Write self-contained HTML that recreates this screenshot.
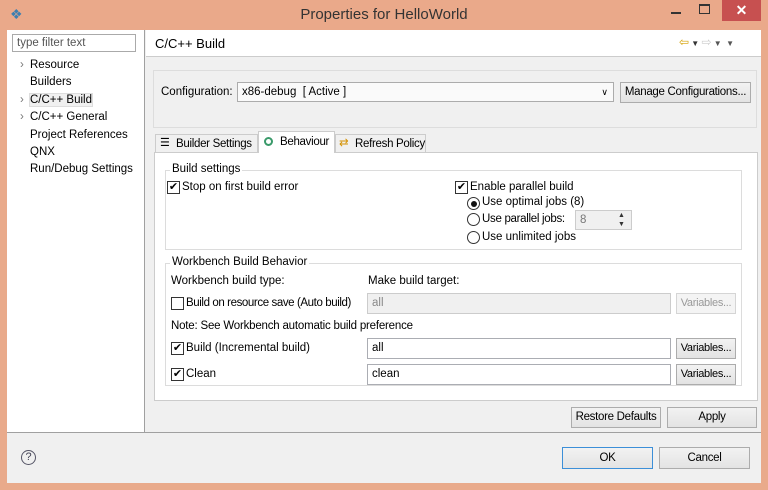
<!DOCTYPE html><html><head><style>
*{box-sizing:border-box;margin:0;padding:0}
body{width:768px;height:490px;background:#e9aa8b;font-family:"Liberation Sans",sans-serif;font-size:11.5px;color:#000;position:relative;overflow:hidden;white-space:nowrap}
.a{position:absolute}
.btn{position:absolute;background:linear-gradient(#f2f2f2,#e3e3e3);border:1px solid #acacac;text-align:center;line-height:19px;overflow:hidden;letter-spacing:-0.3px}
.cb{position:absolute;width:13px;height:13px;border:1px solid #333;background:#fff;font-size:11px;line-height:11px;text-align:center}
.rb{position:absolute;width:13px;height:13px;border:1px solid #333;border-radius:50%;background:#fff}
.inp{position:absolute;background:#fff;border:1px solid #abadb3;padding-left:4px;line-height:18px}
.grp{position:absolute;border:1px solid #dcdcdc}
.lg{position:absolute;background:#fff;padding:0 2px}
</style></head><body>
<div class="a" style="left:0;top:0;width:768px;height:30px;background:#eaa98a"></div>
<div class="a" style="left:10px;top:6px;color:#3c7fb1;font-size:14px">❖</div>
<div class="a" style="left:0;top:6px;width:768px;text-align:center;font-size:15px;color:#333">Properties for HelloWorld</div>
<div class="a" style="left:671px;top:12px;width:10px;height:2px;background:#333"></div>
<div class="a" style="left:699px;top:4px;width:11px;height:10px;border:1px solid #333;border-top-width:2px"></div>
<div class="a" style="left:722px;top:0;width:39px;height:21px;background:#c75050;color:#fff;text-align:center;line-height:20px;font-size:14px;font-weight:bold">✕</div>
<div class="a" style="left:7px;top:30px;width:754px;height:453px;background:#f0f0f0"></div>
<div class="a" style="left:7px;top:30px;width:138px;height:402px;background:#fff;border-right:1px solid #a0a0a0"></div>
<div class="inp" style="left:12px;top:34px;width:124px;height:18px;color:#555;line-height:16px;border-color:#aaa">type filter text</div>
<div class="a" style="left:20px;top:57px;line-height:17.4px;color:#777">›<br><br>›<br>›</div>
<div class="a" style="left:30px;top:57px;line-height:17.4px">Resource<br>Builders<br><span style="background:#f0f0f0;outline:1px solid #ddd">C/C++ Build</span><br>C/C++ General<br>Project References<br>QNX<br>Run/Debug Settings</div>
<div class="a" style="left:146px;top:30px;width:615px;height:27px;background:#fff;border-bottom:1px solid #ccc"></div>
<div class="a" style="left:155px;top:36px;font-size:13px">C/C++ Build</div>
<div class="a" style="left:679px;top:35px;color:#d4a000;font-size:12px">⇦<span style="color:#333;font-size:8px"> ▼ </span><span style="color:#ccc">⇨</span><span style="color:#555;font-size:8px"> ▼ &nbsp;▼</span></div>
<div class="a" style="left:153px;top:70px;width:604px;height:58px;border:1px solid #ddd;background:#f0f0f0"></div>
<div class="a" style="left:161px;top:86px">Configuration:</div>
<div class="inp" style="left:237px;top:82px;width:377px;height:20px;border-color:#acacac;background:#fafafa">x86-debug &nbsp;[ Active ]<span style="position:absolute;right:5px;font-size:9px">∨</span></div>
<div class="btn" style="left:620px;top:82px;width:131px;height:21px">Manage Configurations...</div>
<div class="a" style="left:155px;top:134px;width:103px;height:19px;border:1px solid #ccc;background:#f0f0f0;padding-left:20px;line-height:18px;letter-spacing:-0.3px">Builder Settings</div>
<div class="a" style="left:160px;top:136px;font-size:11px">☰</div>
<div class="a" style="left:258px;top:131px;width:77px;height:22px;border:1px solid #ccc;border-bottom:none;background:#fff;padding-left:21px;line-height:20px;z-index:2;letter-spacing:-0.3px">Behaviour</div>
<div class="a" style="left:264px;top:137px;width:9px;height:9px;border-radius:50%;border:2px solid #3a9a6a;z-index:3"></div>
<div class="a" style="left:335px;top:134px;width:91px;height:19px;border:1px solid #ccc;background:#f0f0f0;padding-left:19px;line-height:18px;letter-spacing:-0.3px">Refresh Policy</div>
<div class="a" style="left:339px;top:135px;color:#d49000">⇄</div>
<div class="a" style="left:154px;top:152px;width:604px;height:249px;border:1px solid #ccc;background:#fff"></div>
<div class="grp" style="left:165px;top:170px;width:577px;height:80px"></div>
<div class="lg" style="left:170px;top:163px">Build settings</div>
<div class="cb" style="left:167px;top:181px">✔</div><div class="a" style="left:182px;top:181px">Stop on first build error</div>
<div class="cb" style="left:455px;top:181px">✔</div><div class="a" style="left:470px;top:181px">Enable parallel build</div>
<div class="rb" style="left:467px;top:197px"><div style="margin:2.5px;width:6px;height:6px;border-radius:50%;background:#111"></div></div><div class="a" style="left:482px;top:196px">Use optimal jobs (8)</div>
<div class="rb" style="left:467px;top:213px"></div><div class="a" style="left:482px;top:213px;letter-spacing:-0.3px">Use parallel jobs:</div>
<div class="inp" style="left:575px;top:210px;width:57px;height:20px;background:#f0f0f0;color:#777;border-color:#ccc">8</div>
<div class="a" style="left:618px;top:211px;font-size:7px;line-height:9px;color:#333">▲<br>▼</div>
<div class="rb" style="left:467px;top:231px"></div><div class="a" style="left:482px;top:231px">Use unlimited jobs</div>
<div class="grp" style="left:165px;top:263px;width:577px;height:123px"></div>
<div class="lg" style="left:170px;top:256px">Workbench Build Behavior</div>
<div class="a" style="left:171px;top:275px">Workbench build type:</div>
<div class="a" style="left:368px;top:275px">Make build target:</div>
<div class="cb" style="left:171px;top:297px"></div><div class="a" style="left:186px;top:297px;letter-spacing:-0.4px">Build on resource save (Auto build)</div>
<div class="inp" style="left:367px;top:293px;width:304px;height:21px;background:#f0f0f0;color:#888;border-color:#ccc">all</div>
<div class="btn" style="left:676px;top:293px;width:60px;height:21px;color:#999;background:#f4f4f4;border-color:#d5d5d5;font-size:11px">Variables...</div>
<div class="a" style="left:171px;top:320px;letter-spacing:-0.2px">Note: See Workbench automatic build preference</div>
<div class="cb" style="left:171px;top:342px">✔</div><div class="a" style="left:186px;top:342px">Build (Incremental build)</div>
<div class="inp" style="left:367px;top:338px;width:304px;height:21px">all</div>
<div class="btn" style="left:676px;top:338px;width:60px;height:21px;font-size:11px">Variables...</div>
<div class="cb" style="left:171px;top:368px">✔</div><div class="a" style="left:186px;top:368px">Clean</div>
<div class="inp" style="left:367px;top:364px;width:304px;height:21px">clean</div>
<div class="btn" style="left:676px;top:364px;width:60px;height:21px;font-size:11px">Variables...</div>
<div class="btn" style="left:571px;top:407px;width:90px;height:21px">Restore Defaults</div>
<div class="btn" style="left:667px;top:407px;width:90px;height:21px">Apply</div>
<div class="a" style="left:7px;top:432px;width:754px;height:1px;background:#a0a0a0"></div>
<div class="a" style="left:21px;top:450px;width:15px;height:15px;border:1px solid #556;border-radius:50%;text-align:center;font-size:11px;line-height:13px;color:#445">?</div>
<div class="btn" style="left:562px;top:447px;width:91px;height:22px;border-color:#3c8fd8;line-height:20px">OK</div>
<div class="btn" style="left:659px;top:447px;width:91px;height:22px;line-height:20px">Cancel</div>
</body></html>
